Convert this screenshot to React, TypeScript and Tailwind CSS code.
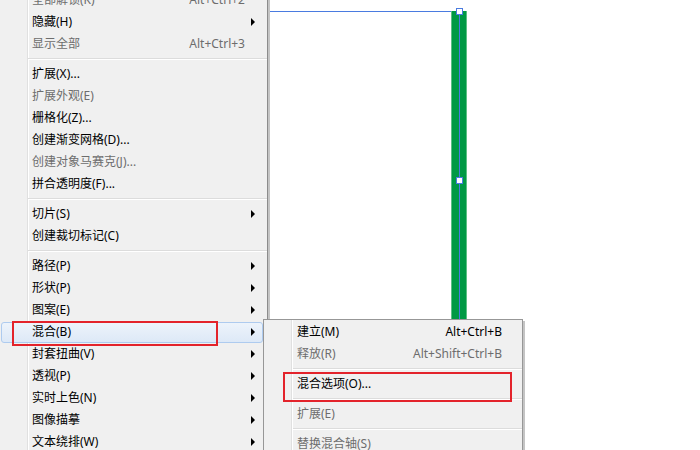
import React from 'react';

type Item =
  | { sep: true }
  | { label: string; shortcut?: string; disabled?: boolean; arrow?: boolean; active?: boolean; boxed?: string; sep?: false };

const mainItems: Item[] = [
  { label: '全部解锁(K)', shortcut: 'Alt+Ctrl+2', disabled: true },
  { label: '隐藏(H)', arrow: true },
  { label: '显示全部', shortcut: 'Alt+Ctrl+3', disabled: true },
  { sep: true },
  { label: '扩展(X)...' },
  { label: '扩展外观(E)', disabled: true },
  { label: '栅格化(Z)...' },
  { label: '创建渐变网格(D)...' },
  { label: '创建对象马赛克(J)...', disabled: true },
  { label: '拼合透明度(F)...' },
  { sep: true },
  { label: '切片(S)', arrow: true },
  { label: '创建裁切标记(C)' },
  { sep: true },
  { label: '路径(P)', arrow: true },
  { label: '形状(P)', arrow: true },
  { label: '图案(E)', arrow: true },
  { label: '混合(B)', arrow: true, active: true, boxed: '-left-[16px] w-[206px] top-0 h-[25px]' },
  { label: '封套扭曲(V)', arrow: true },
  { label: '透视(P)', arrow: true },
  { label: '实时上色(N)', arrow: true },
  { label: '图像描摹', arrow: true },
  { label: '文本绕排(W)', arrow: true },
];

const subItems: Item[] = [
  { label: '建立(M)', shortcut: 'Alt+Ctrl+B' },
  { label: '释放(R)', shortcut: 'Alt+Shift+Ctrl+B', disabled: true },
  { sep: true },
  { label: '混合选项(O)...', boxed: '-left-[10px] w-[229px] -top-[1px] h-[30px]' },
  { sep: true },
  { label: '扩展(E)', disabled: true },
  { sep: true },
  { label: '替换混合轴(S)', disabled: true },
];

const Arrow = () => (
  <span className="block w-0 h-0 border-l-[4px] border-l-black border-y-[4px] border-y-transparent" />
);

const MenuRows: React.FC<{ items: Item[]; padRight: string }> = ({ items, padRight }) => (
  <>
    {items.map((it, i) =>
      it.sep ? (
        <div key={i} className="h-[8px] flex flex-col justify-center">
          <div className="h-px bg-[#dcdcdc]" />
          <div className="h-px bg-white" />
        </div>
      ) : (
        <div
          key={i}
          className={`relative flex items-center h-[22px] pl-[4px] ${it.disabled ? 'text-[#6d6d6d]' : 'text-black'}`}
        >
          {it.active && (
            <div className="absolute -left-[27px] right-[4px] top-[1px] bottom-0 rounded-[3px] border border-[#aecbef] bg-gradient-to-b from-[#edf3fb] to-[#dde9f7]" />
          )}
          <span className="relative flex-1 whitespace-nowrap">{it.label}</span>
          {it.shortcut && <span className="relative whitespace-nowrap">{it.shortcut}</span>}
          <span className={`relative flex items-center ${padRight}`}>{it.arrow && <Arrow />}</span>
          {it.boxed && <div className={`absolute z-10 border-2 border-[#e3232b] ${it.boxed}`} />}
        </div>
      )
    )}
  </>
);

const App: React.FC = () => {
  return (
    <div
      className="relative w-[700px] h-[450px] overflow-hidden bg-white text-[12px]"
      style={{ fontFamily: '"Noto Sans", "Noto Sans CJK SC", sans-serif' }}
    >
      {/* artwork on the canvas */}
      <div className="absolute left-[268px] top-[11px] w-[191px] h-px bg-[#4a7be0]" />
      <div className="absolute left-[451px] top-[11px] w-[16px] h-[440px] bg-[#009944] border-x border-[#5cc084]" />
      <div className="absolute left-[459px] top-[11px] w-px h-[440px] bg-[#4a7be0]" />
      <div className="absolute left-[456px] top-[8px] w-[7px] h-[7px] bg-white border border-[#4a7be0]" />
      <div className="absolute left-[456px] top-[177px] w-[7px] h-[7px] bg-white border border-[#4a7be0]" />

      {/* main menu */}
      <div className="absolute left-0 -top-[11px] w-[268px] bg-[#f0f0f0] border-r border-[#8c8c8c] shadow-[2px_0_0_#c4c4c4]">
        <div className="absolute left-[27px] top-0 bottom-0 w-px bg-[#e0e0e0]" />
        <div className="absolute left-[28px] top-0 bottom-0 w-px bg-white" />
        <div className="relative pl-[28px]">
          <MenuRows items={mainItems} padRight="w-[22px] pl-[6px]" />
        </div>
      </div>

      {/* submenu */}
      <div className="absolute left-[263px] top-[319px] w-[260px] h-[150px] bg-[#f0f0f0] border border-[#979797] shadow-[2px_2px_0_#c4c4c4]">
        <div className="absolute left-[27px] top-0 bottom-0 w-px bg-[#e0e0e0]" />
        <div className="absolute left-[28px] top-0 bottom-0 w-px bg-white" />
        <div className="relative pl-[29px] pt-px">
          <MenuRows items={subItems} padRight="w-[20px]" />
        </div>
      </div>
    </div>
  );
};

export default App;
